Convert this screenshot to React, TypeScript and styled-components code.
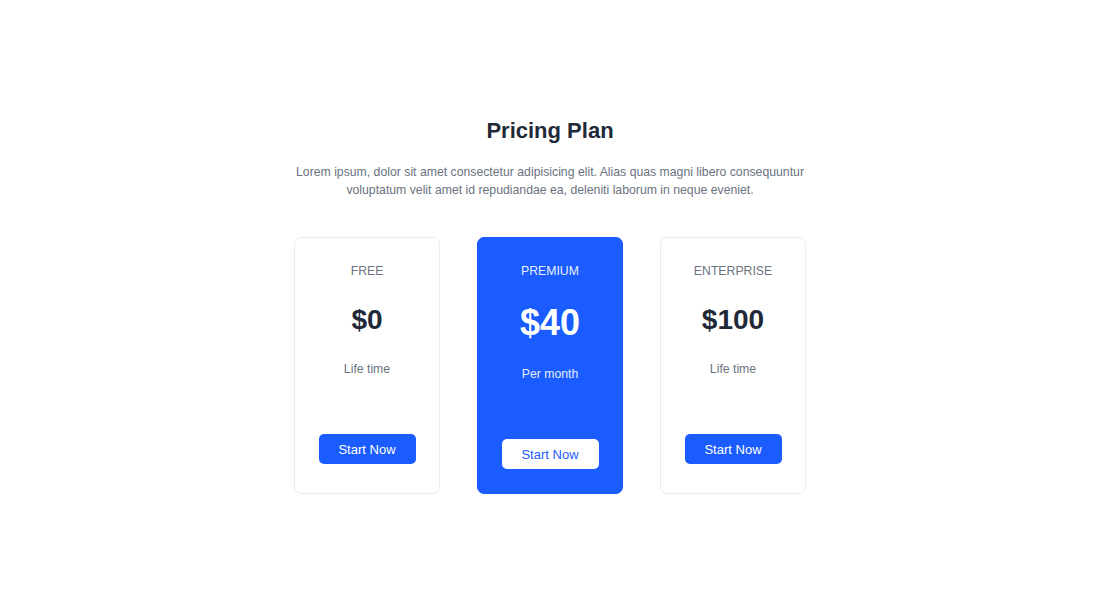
import styled, { createGlobalStyle } from 'styled-components';

const GlobalStyle = createGlobalStyle`
  * {
    box-sizing: border-box;
  }

  body {
    margin: 0;
    background: #ffffff;
    font-family: 'Liberation Sans', Arial, sans-serif;
  }
`;

const Page = styled.main`
  min-height: 100vh;
  display: flex;
  flex-direction: column;
  align-items: center;
  justify-content: center;
`;

const Title = styled.h1`
  margin: 0;
  font-size: 22px;
  line-height: 28px;
  font-weight: 700;
  color: #1f2937;
`;

const Intro = styled.p`
  margin: 18px 0 0;
  max-width: 516px;
  text-align: center;
  font-size: 12.25px;
  line-height: 18px;
  color: #6b7280;
`;

const Plans = styled.div`
  margin-top: 38px;
  display: flex;
  align-items: stretch;
  gap: 37px;
`;

const Card = styled.div<{ $featured?: boolean }>`
  width: 146px;
  display: flex;
  flex-direction: column;
  align-items: center;
  padding: 23px 0 24px;
  border-radius: 7px;
  border: 1px solid ${({ $featured }) => ($featured ? '#1a5cff' : '#ececec')};
  background: ${({ $featured }) => ($featured ? '#1a5cff' : '#ffffff')};
`;

const PlanName = styled.div<{ $featured?: boolean }>`
  font-size: 12.25px;
  line-height: 20px;
  text-transform: uppercase;
  color: ${({ $featured }) => ($featured ? '#e6eeff' : '#6b7280')};
`;

const Price = styled.div<{ $featured?: boolean }>`
  margin-top: 21px;
  font-size: ${({ $featured }) => ($featured ? '36px' : '28px')};
  line-height: ${({ $featured }) => ($featured ? '41px' : '36px')};
  font-weight: 700;
  color: ${({ $featured }) => ($featured ? '#ffffff' : '#1f2937')};
`;

const Period = styled.div<{ $featured?: boolean }>`
  margin-top: 21px;
  font-size: 12.25px;
  line-height: 20px;
  color: ${({ $featured }) => ($featured ? '#e6eeff' : '#6b7280')};
`;

const StartButton = styled.button<{ $featured?: boolean }>`
  margin-top: 55px;
  width: 97px;
  height: 30px;
  border: none;
  border-radius: 5px;
  font-family: inherit;
  font-size: 13px;
  cursor: pointer;
  background: ${({ $featured }) => ($featured ? '#ffffff' : '#1a5cff')};
  color: ${({ $featured }) => ($featured ? '#1a5cff' : '#ffffff')};
`;

const plans = [
  { name: 'Free', price: '$0', period: 'Life time', featured: false },
  { name: 'Premium', price: '$40', period: 'Per month', featured: true },
  { name: 'Enterprise', price: '$100', period: 'Life time', featured: false },
];

function App() {
  return (
    <>
      <GlobalStyle />
      <Page>
        <Title>Pricing Plan</Title>
        <Intro>
          Lorem ipsum, dolor sit amet consectetur adipisicing elit. Alias quas magni libero
          consequuntur voluptatum velit amet id repudiandae ea, deleniti laborum in neque eveniet.
        </Intro>
        <Plans>
          {plans.map((plan) => (
            <Card key={plan.name} $featured={plan.featured}>
              <PlanName $featured={plan.featured}>{plan.name}</PlanName>
              <Price $featured={plan.featured}>{plan.price}</Price>
              <Period $featured={plan.featured}>{plan.period}</Period>
              <StartButton $featured={plan.featured}>Start Now</StartButton>
            </Card>
          ))}
        </Plans>
      </Page>
    </>
  );
}

export default App;
